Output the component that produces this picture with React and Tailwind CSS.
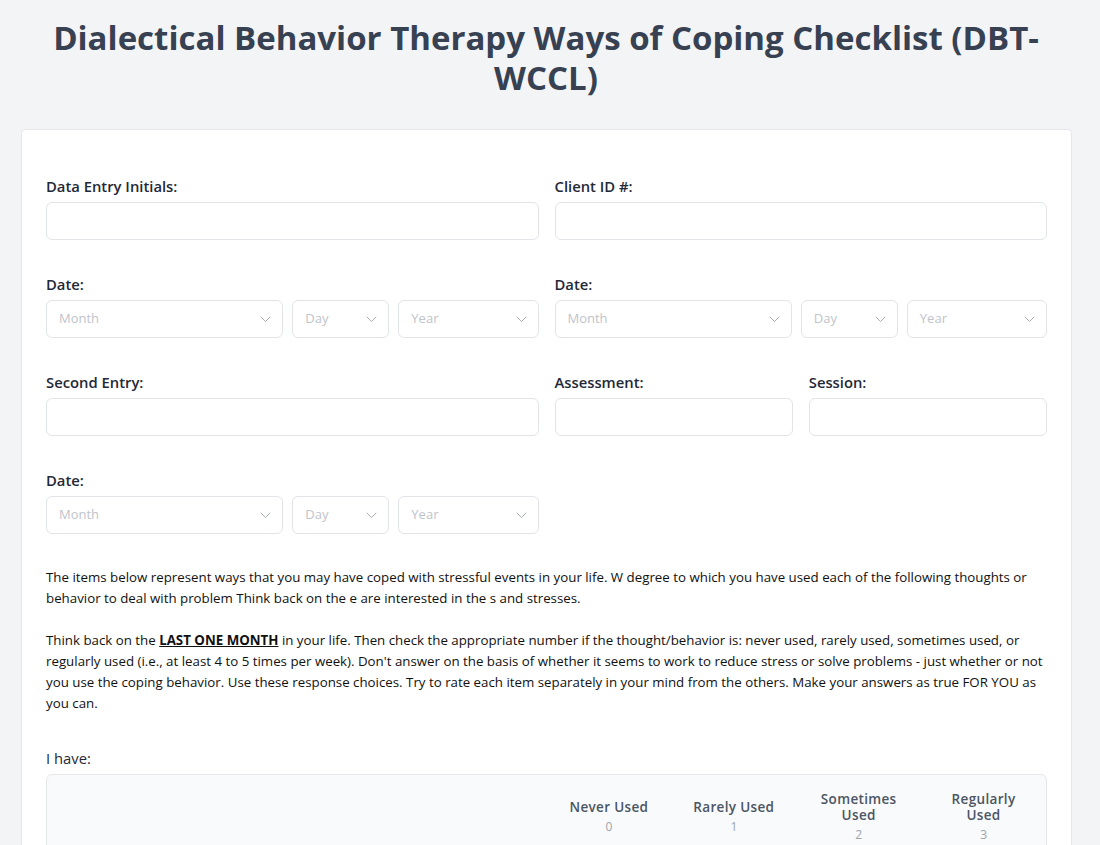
import React from "react";

const FONT = { fontFamily: '"Open Sans", "Noto Sans", sans-serif' };

function Chevron() {
  return (
    <svg width="11" height="7" viewBox="0 0 11 7" fill="none" className="shrink-0">
      <path d="M0.8 0.8 L5.5 5.6 L10.2 0.8" stroke="#a8adb5" strokeWidth="1" />
    </svg>
  );
}

function Select({ label }) {
  return (
    <div className="h-[38px] border border-[#e1e4e8] rounded-md bg-white flex items-center justify-between pl-3 pr-[11px]">
      <span className="text-[13px] text-[#c0c4cb]">{label}</span>
      <Chevron />
    </div>
  );
}

function Input() {
  return <div className="h-[38px] border border-[#e1e4e8] rounded-md bg-white" />;
}

function Label({ children }) {
  return (
    <div className="text-[14.8px] leading-5 font-semibold text-[#1f2937] mb-1.5">{children}</div>
  );
}

function DateGroup() {
  return (
    <div>
      <Label>Date:</Label>
      <div className="grid grid-cols-[237fr_97fr_140fr] gap-[9px]">
        <Select label="Month" />
        <Select label="Day" />
        <Select label="Year" />
      </div>
    </div>
  );
}

function Header({ title, num }) {
  return (
    <div className="flex flex-col items-center justify-center text-center py-4">
      <div className="text-[13.5px] leading-4 font-semibold tracking-wide text-[#4b5563] px-3">{title}</div>
      <div className="text-[12px] leading-4 text-[#9ca3af] mt-1">{num}</div>
    </div>
  );
}

export default function App() {
  return (
    <div className="min-h-screen bg-[#f3f4f6] pt-[18px] pl-5 pr-7" style={FONT}>
      <h1 className="text-center text-[33px] leading-[40px] font-bold text-[#374151]">
        Dialectical Behavior Therapy Ways of Coping Checklist (DBT-
        <br />
        WCCL)
      </h1>
      <div className="mt-[31px] ml-px bg-white border border-[#e5e7eb] rounded px-6 pt-[46px] pb-10">
        <div className="grid grid-cols-2 gap-4 mb-[34px]">
          <div>
            <Label>Data Entry Initials:</Label>
            <Input />
          </div>
          <div>
            <Label>Client ID #:</Label>
            <Input />
          </div>
        </div>
        <div className="grid grid-cols-2 gap-4 mb-[34px]">
          <DateGroup />
          <DateGroup />
        </div>
        <div className="grid grid-cols-2 gap-4 mb-[34px]">
          <div>
            <Label>Second Entry:</Label>
            <Input />
          </div>
          <div className="grid grid-cols-2 gap-4">
            <div>
              <Label>Assessment:</Label>
              <Input />
            </div>
            <div>
              <Label>Session:</Label>
              <Input />
            </div>
          </div>
        </div>
        <div className="grid grid-cols-2 gap-4 mb-[33px]">
          <DateGroup />
        </div>
        <div className="text-[13.3px] leading-[21px] text-[#111111]">
          <p className="whitespace-nowrap">
            The items below represent ways that you may have coped with stressful events in your life. W degree to which you have used each of the following thoughts or
            <br />
            behavior to deal with problem Think back on the e are interested in the s and stresses.
          </p>
          <p className="mt-[21px] whitespace-nowrap">
            Think back on the <span className="font-bold underline">LAST ONE MONTH</span> in your life. Then check the appropriate number if the thought/behavior is: never used, rarely used, sometimes used, or
            <br />
            regularly used (i.e., at least 4 to 5 times per week). Don't answer on the basis of whether it seems to work to reduce stress or solve problems - just whether or not
            <br />
            you use the coping behavior. Use these response choices. Try to rate each item separately in your mind from the others. Make your answers as true FOR YOU as
            <br />
            you can.
          </p>
        </div>
        <div className="mt-[34px]">
          <div className="text-[14.8px] leading-5 font-medium text-[#1f2937] mb-1.5">I have:</div>
          <div className="border border-[#e5e7eb] rounded-md bg-[#f9fafb] grid grid-cols-8">
            <div className="col-span-4" />
            <Header title="Never Used" num="0" />
            <Header title="Rarely Used" num="1" />
            <Header title="Sometimes Used" num="2" />
            <Header title="Regularly Used" num="3" />
          </div>
        </div>
      </div>
    </div>
  );
}
